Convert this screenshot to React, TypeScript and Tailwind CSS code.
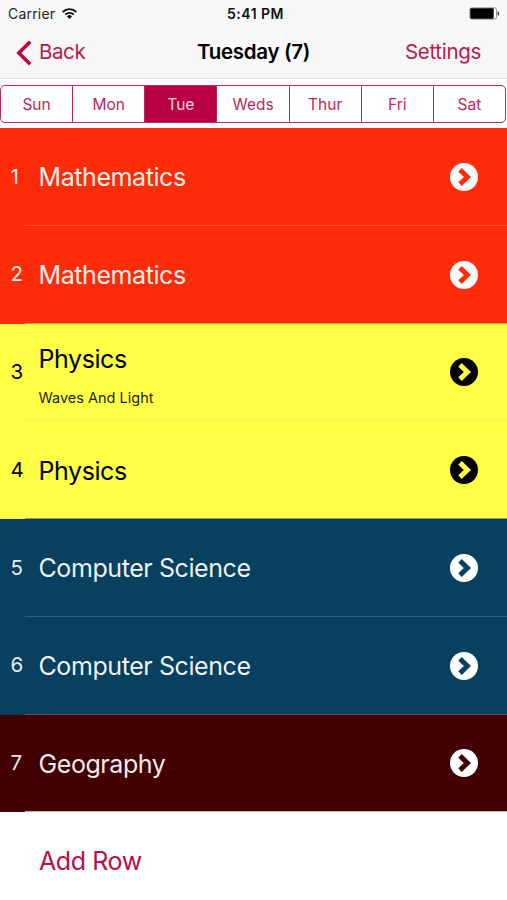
const days = ['Sun', 'Mon', 'Tue', 'Weds', 'Thur', 'Fri', 'Sat']

const light = { number: 'text-white/90', title: 'text-white/95', icon: 'text-white' }
const dark = { number: 'text-black', title: 'text-black', icon: 'text-black' }

const red = { ...light, row: 'bg-[#fe2c09]', chevron: 'stroke-[#fe2c09]', line: 'bg-[#ff4f31]' }
const yellow = { ...dark, row: 'bg-[#ffff45]', chevron: 'stroke-[#ffff45]', line: 'bg-[#f1f162]' }
const blue = { ...light, row: 'bg-[#084060]', chevron: 'stroke-[#084060]', line: 'bg-[#365f7c]' }
const maroon = { ...light, row: 'bg-[#430000]', chevron: 'stroke-[#430000]', line: 'bg-[#c9b0b2]' }

const lessons = [
    { title: 'Mathematics', theme: red },
    { title: 'Mathematics', theme: { ...red, line: 'bg-[#ff8a3a]' } },
    { title: 'Physics', note: 'Waves And Light', theme: yellow },
    { title: 'Physics', theme: { ...yellow, line: 'bg-[#8fa052]' } },
    { title: 'Computer Science', theme: blue },
    { title: 'Computer Science', theme: { ...blue, line: 'bg-[#5c5564]' } },
    { title: 'Geography', theme: maroon },
]

function StatusBar() {
    return (
        <div className="flex h-[27px] items-center justify-between pl-2 pr-[7px]">
            <div className="flex flex-1 items-center gap-[7px]">
                <span className="text-[14px] leading-none tracking-[0.2px] text-[#222]">Carrier</span>
                <svg className="h-[11px] w-[15px]" viewBox="0 0 15 11" fill="none" stroke="#111" strokeWidth="1.8">
                    <path d="M.7 4a9.6 9.6 0 0 1 13.6 0" />
                    <path d="M3.2 6.6a6.1 6.1 0 0 1 8.6 0" />
                    <path d="M7.5 11 5 8.4a3.5 3.5 0 0 1 5 0Z" fill="#111" stroke="none" />
                </svg>
            </div>
            <span className="pl-[3px] text-[14px] font-semibold leading-none tracking-[0.5px] text-[#111]">5:41 PM</span>
            <div className="flex flex-1 justify-end">
                <svg className="h-[13px] w-[31px]" viewBox="0 0 31 13">
                    <rect x=".9" y=".9" width="26.6" height="11.2" rx="2" fill="#fff" stroke="#777" strokeWidth=".8" />
                    <rect x="1.3" y="1.3" width="23.4" height="10.4" rx="1" fill="#000" />
                    <path d="M28.7 4.2c1.9.7 1.9 3.9 0 4.6Z" fill="#222" />
                </svg>
            </div>
        </div>
    )
}

function NavBar() {
    return (
        <div className="flex h-[51px] items-center pl-4 pr-[26px] text-[20.5px] tracking-[-0.4px] text-[#b8194f]">
            <div className="flex w-[181px] items-center gap-[7px]">
                <svg className="h-[26px] w-4" viewBox="0 0 16 26" fill="none" stroke="#b9063f" strokeWidth="3.6">
                    <path d="M14.2 1.8 2.9 13l11.3 11.2" />
                </svg>
                <span>Back</span>
            </div>
            <h1 className="text-[20.5px] font-semibold tracking-[-0.3px] text-black">Tuesday (7)</h1>
            <div className="flex flex-1 justify-end">
                <span className="tracking-[-0.3px]">Settings</span>
            </div>
        </div>
    )
}

function DayPicker() {
    return (
        <div className="h-[49px] bg-white pr-px pt-[6px]">
            <div className="flex h-[38px] overflow-hidden rounded-[5px] border-[1.5px] border-[#bd2857]">
                {days.map((day) => (
                    <div
                        key={day}
                        className={
                            day === 'Tue'
                                ? 'flex flex-1 items-center justify-center border-r border-[#bd2857] bg-[#b90042] pt-px text-[15.5px] text-[#f6d5e0]'
                                : 'flex flex-1 items-center justify-center border-r border-[#bd2857] pt-px text-[15.5px] text-[#bd2857] last:border-r-0'
                        }
                    >
                        {day}
                    </div>
                ))}
            </div>
        </div>
    )
}

export default function App() {
    return (
        <div className="flex h-[900px] w-[507px] flex-col overflow-hidden bg-white font-['Inter',sans-serif]">
            <header className="h-[79px] shrink-0 border-b border-[#dedede] bg-[#f7f7f7]">
                <StatusBar />
                <NavBar />
            </header>
            <DayPicker />
            {lessons.map(({ title, note, theme }, i) => (
                <div key={i} className={`flex h-[97.75px] shrink-0 flex-col ${theme.row}`}>
                    <div className="flex min-h-0 flex-1 items-center pl-[10.5px] pr-[29px] pt-px">
                        <span className={`w-[28px] text-[20.5px] ${theme.number}`}>{i + 1}</span>
                        <div className={note ? 'flex flex-1 flex-col gap-[15px] pt-[7px]' : 'flex-1 pt-px'}>
                            <span className={`block text-[25px] leading-[30px] tracking-[-0.42px] ${theme.title}`}>{title}</span>
                            {note && <span className="text-[14.5px] leading-[18px] text-black/90">{note}</span>}
                        </div>
                        <svg className={`size-7 ${theme.icon}`} viewBox="0 0 28 28" fill="none">
                            <circle cx="14" cy="14" r="14" fill="currentColor" />
                            <path
                                d="m10 6.9 7.4 7.1-7.4 7.1"
                                strokeWidth="5"
                                className={theme.chevron}
                            />
                        </svg>
                    </div>
                    <div className={`ml-[25px] h-px ${theme.line}`} />
                </div>
            ))}
            <div className="flex flex-1 items-center pl-[39px] pb-px">
                <span className="pt-[11px] text-[25px] leading-[30px] tracking-[-0.42px] text-[#b90d4a]">Add Row</span>
            </div>
        </div>
    )
}
